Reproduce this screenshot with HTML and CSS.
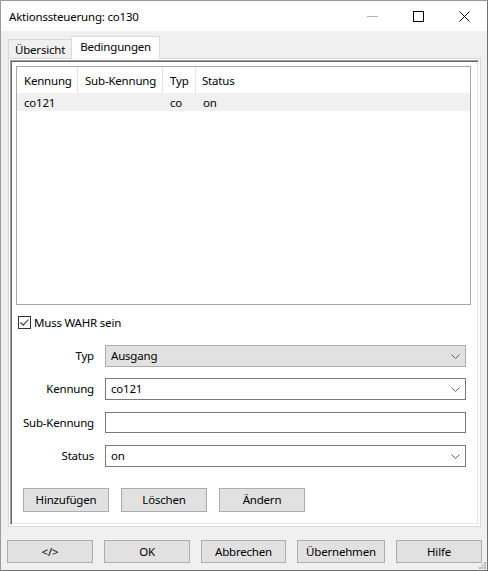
FILE: index.html
```html
<!DOCTYPE html>
<html lang="de">
<head>
<meta charset="utf-8">
<title>Aktionssteuerung: co130</title>
<link rel="stylesheet" href="styles.css">
</head>
<body>
<div class="window">
  <div class="titlebar">
    <span class="title">Aktionssteuerung: co130</span>
    <div class="caption">
      <span class="cap"><svg width="11" height="10" viewBox="0 0 11 10"><line x1="0" y1="5.5" x2="11" y2="5.5" stroke="#b4b4b4" stroke-width="1"/></svg></span>
      <span class="cap"><svg width="11" height="11" viewBox="0 0 11 11"><rect x="0.5" y="0.5" width="10" height="10" fill="none" stroke="#000" stroke-width="1"/></svg></span>
      <span class="cap"><svg width="11" height="11" viewBox="0 0 11 11"><path d="M0.5 0.5 L10.5 10.5 M10.5 0.5 L0.5 10.5" stroke="#000" stroke-width="1" fill="none"/></svg></span>
    </div>
  </div>
  <div class="client">
    <div class="tabs">
      <div class="tab">Übersicht</div>
      <div class="tab active">Bedingungen</div>
    </div>
    <div class="tabpanel">
      <div class="sunken">
        <div class="list">
          <div class="lv-head">
            <div class="col c1">Kennung</div>
            <div class="col c2">Sub-Kennung</div>
            <div class="col c3">Typ</div>
            <div class="col c4">Status</div>
          </div>
          <div class="lv-row">
            <div class="cell c1">co121</div>
            <div class="cell c2"></div>
            <div class="cell c3">co</div>
            <div class="cell c4">on</div>
          </div>
        </div>
        <div class="check">
          <span class="box"><svg width="11" height="11" viewBox="0 0 11 11"><path d="M1.5 5.5 L4.2 8.2 L9.5 2.5" fill="none" stroke="#333" stroke-width="1.1"/></svg></span>
          <span class="check-label">Muss WAHR sein</span>
        </div>
        <div class="form">
          <div class="frow r1">
            <span class="lbl">Typ</span>
            <div class="combo disabled"><span>Ausgang</span><svg class="chev" width="9" height="5" viewBox="0 0 9 5"><path d="M0.5 0.5 L4.5 4.5 L8.5 0.5" fill="none" stroke="#606060" stroke-width="1"/></svg></div>
          </div>
          <div class="frow r2">
            <span class="lbl">Kennung</span>
            <div class="combo"><span>co121</span><svg class="chev" width="9" height="5" viewBox="0 0 9 5"><path d="M0.5 0.5 L4.5 4.5 L8.5 0.5" fill="none" stroke="#606060" stroke-width="1"/></svg></div>
          </div>
          <div class="frow r3">
            <span class="lbl">Sub-Kennung</span>
            <div class="textbox"></div>
          </div>
          <div class="frow r4">
            <span class="lbl">Status</span>
            <div class="combo"><span>on</span><svg class="chev" width="9" height="5" viewBox="0 0 9 5"><path d="M0.5 0.5 L4.5 4.5 L8.5 0.5" fill="none" stroke="#606060" stroke-width="1"/></svg></div>
          </div>
        </div>
        <div class="actions">
          <div class="btn">Hinzufügen</div>
          <div class="btn">Löschen</div>
          <div class="btn">Ändern</div>
        </div>
      </div>
    </div>
    <div class="footer">
      <div class="btn fb">&lt;/&gt;</div>
      <div class="btn fb">OK</div>
      <div class="btn fb w85">Abbrechen</div>
      <div class="btn fb w88">Übernehmen</div>
      <div class="btn fb">Hilfe</div>
    </div>
    <svg class="grip" width="7" height="7" viewBox="0 0 7 7">
      <rect x="5" y="0" width="2" height="2" fill="#b8b8b8"/>
      <rect x="2.5" y="2.5" width="2" height="2" fill="#b8b8b8"/>
      <rect x="5" y="2.5" width="2" height="2" fill="#b8b8b8"/>
      <rect x="0" y="5" width="2" height="2" fill="#b8b8b8"/>
      <rect x="2.5" y="5" width="2" height="2" fill="#b8b8b8"/>
      <rect x="5" y="5" width="2" height="2" fill="#b8b8b8"/>
    </svg>
  </div>
</div>
</body>
</html>
```
FILE: styles.css
```css
* { box-sizing: border-box; }
html, body { margin: 0; padding: 0; }
body {
  font-family: "Segoe UI", "Noto Sans", "Open Sans", sans-serif;
  font-size: 11.5px;
  letter-spacing: -0.2px;
  color: #000;
  background: #fff;
}
.window {
  width: 488px;
  height: 571px;
  border: 1px solid #9a9a9a;
  border-right-color: #707070;
  border-bottom-color: #707070;
  display: flex;
  flex-direction: column;
  background: #f0f0f0;
}
.titlebar {
  height: 30px;
  background: #fff;
  display: flex;
  align-items: center;
  justify-content: space-between;
  flex: none;
}
.title {
  padding-left: 8px;
  line-height: 16px;
  margin-top: 1px;
}
.caption { display: flex; height: 30px; }
.cap {
  width: 46px;
  height: 30px;
  display: flex;
  align-items: center;
  justify-content: center;
}
.client {
  flex: 1;
  display: flex;
  flex-direction: column;
  position: relative;
}
.tabs {
  margin: 5px 0 0 7px;
  height: 22px;
  display: flex;
  align-items: flex-end;
  position: relative;
  z-index: 2;
}
.tab {
  height: 19px;
  padding: 0 6px;
  border: 1px solid #d9d9d9;
  border-bottom: none;
  border-right: none;
  background: #f0f0f0;
  line-height: 19px;
}
.tab.active {
  height: 23px;
  margin-bottom: -1px;
  padding: 0 8px;
  background: #fff;
  border-right: 1px solid #d9d9d9;
  line-height: 20px;
}
.tabpanel {
  margin-left: 7px;
  width: 473px;
  height: 469px;
  border: 1px solid #d9d9d9;
  background: #fff;
  padding: 1px;
  flex: none;
}
.sunken {
  height: 100%;
  border-top: 1px solid #a0a0a0;
  border-left: 1px solid #a0a0a0;
  border-right: 1px solid #fff;
  border-bottom: 1px solid #fff;
  box-shadow: inset 1px 1px 0 #696969, inset -1px -1px 0 #e3e3e3;
  padding: 5px;
  display: flex;
  flex-direction: column;
}
.list {
  width: 455px;
  height: 239px;
  border: 1px solid #a8a8a8;
  flex: none;
}
.lv-head, .lv-row {
  display: grid;
  grid-template-columns: 61px 85px 33px 1fr;
}
.lv-head { height: 26px; }
.col {
  border-right: 1px solid #e5e5e5;
  line-height: 27px;
  padding-left: 7px;
  white-space: nowrap;
}
.col.c2 { padding-left: 7px; }
.col.c4 { border-right: none; padding-left: 6px; }
.lv-row {
  height: 18px;
  background: #f0f0f0;
}
.cell { line-height: 19px; padding-left: 7px; }
.cell.c2 { padding-left: 8px; }
.cell.c4 { padding-left: 7px; }
.check {
  margin-top: 11px;
  margin-left: 2px;
  display: flex;
  align-items: center;
  height: 13px;
}
.box {
  width: 13px;
  height: 13px;
  border: 1px solid #333;
  background: #fff;
  display: flex;
  align-items: center;
  justify-content: center;
  flex: none;
}
.check-label { margin-left: 3px; line-height: 16px; }
.form {
  margin-top: 16px;
  margin-left: -4px;
  display: flex;
  flex-direction: column;
}
.frow {
  display: grid;
  grid-template-columns: 82px 361px;
  column-gap: 11px;
  align-items: center;
  height: 22px;
}
.r2 { margin-top: 11px; }
.r3 { margin-top: 12px; height: 21px; }
.r4 { margin-top: 12px; }
.lbl { text-align: right; line-height: 16px; }
.combo, .textbox {
  height: 22px;
  border: 1px solid #7a7a7a;
  background: #fff;
  display: flex;
  align-items: center;
  justify-content: space-between;
  padding: 0 5px 0 5px;
}
.textbox { height: 21px; }
.combo.disabled {
  background: #e1e1e1;
  border-color: #adadad;
}
.combo span { line-height: 16px; }
.actions {
  margin-top: 21px;
  margin-left: 7px;
  display: flex;
  gap: 12px;
}
.btn {
  width: 86px;
  height: 24px;
  border: 1px solid #adadad;
  background: #e1e1e1;
  display: flex;
  align-items: center;
  justify-content: center;
  line-height: 16px;
}
.footer {
  margin: 13px 5px 0 6px;
  display: flex;
  justify-content: space-between;
}
.btn.fb { height: 23px; }
.btn.w85 { width: 85px; }
.btn.w88 { width: 88px; }
.grip {
  position: absolute;
  right: 1px;
  bottom: 1px;
}
```
